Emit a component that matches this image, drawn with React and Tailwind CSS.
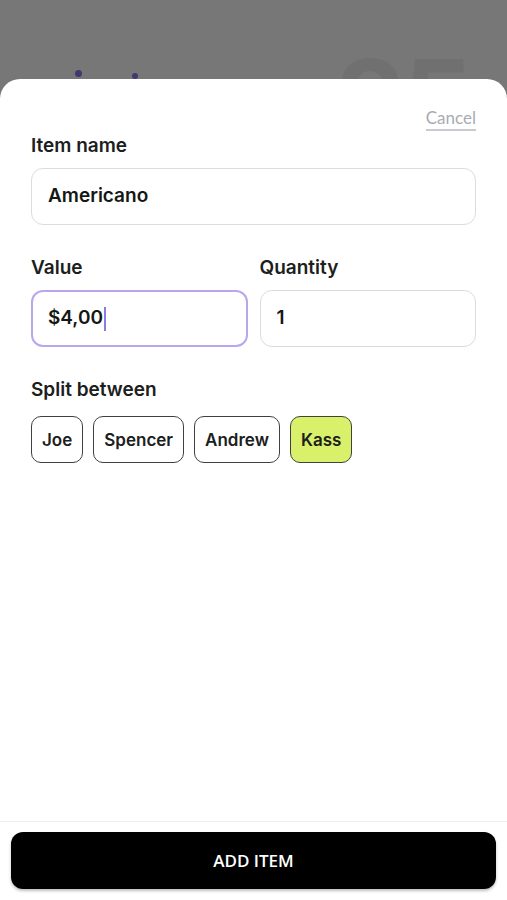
import React from 'react'

const people = [
  { name: 'Joe', selected: false },
  { name: 'Spencer', selected: false },
  { name: 'Andrew', selected: false },
  { name: 'Kass', selected: true },
]

const App = () => {
  return (
    <div className="min-h-screen bg-[#777777] flex flex-col" style={{ fontFamily: 'Inter, "Noto Sans", sans-serif' }}>
      {/* what peeks out behind the sheet */}
      <div className="relative h-[79px] overflow-hidden">
        <span className="absolute left-[75px] top-[70px] w-[7px] h-[7px] rounded-full bg-[#3e3a6e]" />
        <span className="absolute left-[132px] top-[73px] w-[6px] h-[6px] rounded-full bg-[#3e3a6e]" />
        <span className="absolute left-[336px] top-[44px] h-[35px] overflow-hidden text-[110px] leading-none font-bold text-[#707070] tracking-tight">25</span>
      </div>

      <div className="flex-1 bg-white rounded-t-[20px] flex flex-col">
        <div className="flex-1 px-[31px] pt-[30px]">
          <div className="flex justify-end">
            <button className="text-[17px] leading-none text-[#a9abb1] border-b-2 border-[#c9cbd0] pb-[3px]" style={{ fontFamily: 'Lato, sans-serif' }}>
              Cancel
            </button>
          </div>

          <label className="block mt-[1px] text-[19px] leading-[28px] font-semibold text-[#1b201c]">Item name</label>
          <div className="mt-[8px] h-[57px] rounded-[12px] border border-[#dcdcdc] flex items-center px-[16px] text-[19px] font-semibold text-[#141814]">
            Americano
          </div>

          <div className="mt-[29px] grid grid-cols-2 gap-[12px]">
            <div>
              <label className="block text-[19px] leading-[28px] font-semibold text-[#1b201c]">Value</label>
              <div className="mt-[8px] h-[57px] rounded-[12px] border-2 border-[#b9a7ee] flex items-center px-[15px] text-[19px] font-semibold text-[#141814]">
                $4,00<span className="ml-[1px] w-[2px] h-[24px] bg-[#8f7ae6]" />
              </div>
            </div>
            <div>
              <label className="block text-[19px] leading-[28px] font-semibold text-[#1b201c]">Quantity</label>
              <div className="mt-[8px] h-[57px] rounded-[12px] border border-[#dcdcdc] flex items-center px-[16px] text-[19px] font-semibold text-[#141814]">
                1
              </div>
            </div>
          </div>

          <label className="block mt-[29px] text-[19px] leading-[28px] font-semibold text-[#1b201c]">Split between</label>
          <div className="mt-[12px] flex gap-[10px]">
            {people.map((p) => (
              <button
                key={p.name}
                className={`h-[47px] px-[10px] pt-[2px] rounded-[10px] border-[1.5px] border-[#404040] text-[17px] font-semibold text-[#1b201c] ${p.selected ? 'bg-[#d8f06a]' : 'bg-white'}`}
              >
                {p.name}
              </button>
            ))}
          </div>
        </div>

        <div className="border-t border-[#ececec] px-[11px] pt-[10px] pb-[11px]">
          <button
            className="w-full h-[57px] rounded-[12px] bg-black text-white text-[17px] font-semibold shadow-[0_2px_3px_rgba(0,0,0,0.25)]"
            style={{ fontFamily: '"Open Sans", sans-serif' }}
          >
            ADD ITEM
          </button>
        </div>
      </div>
    </div>
  )
}

export default App
